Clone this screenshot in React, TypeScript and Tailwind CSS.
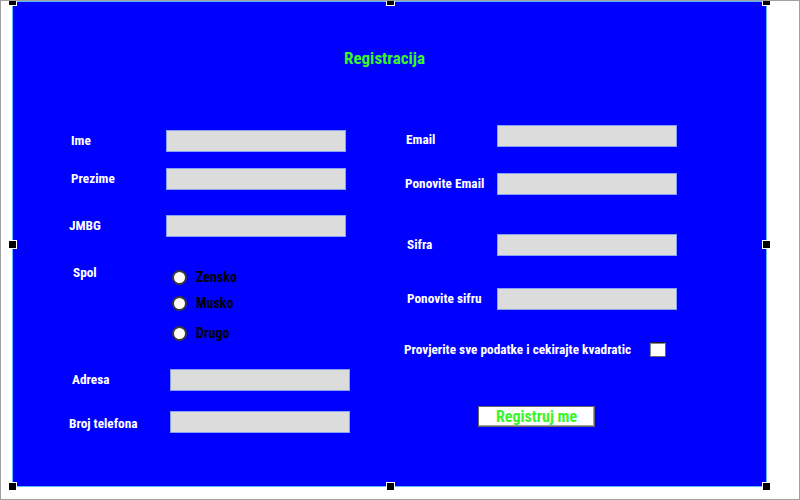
import React from "react";

const font = { fontFamily: '"Liberation Sans Narrow", "Roboto Condensed", Roboto, sans-serif' };

function Handle({ cls }: { cls: string }) {
  return <div className={`absolute w-[9px] h-[9px] bg-black border border-white ${cls}`} />;
}

function Field({ label, labelW, labelPl, labelPt = "", inputW = "w-[180px]", mt = "" }: { label: string; labelW: string; labelPl: string; labelPt?: string; inputW?: string; mt?: string }) {
  return (
    <div className={`flex items-center h-[22px] ${mt}`}>
      <div className={`${labelW} ${labelPl} ${labelPt} text-white font-bold text-[13.3px] leading-[16px] whitespace-nowrap`}>{label}</div>
      <div className={`${inputW} h-[22px] bg-[#dcdcdc] border border-[#86a2f2]`} />
    </div>
  );
}

function Radio({ label, mt = "" }: { label: string; mt?: string }) {
  return (
    <div className={`flex items-center h-[16px] ${mt}`}>
      <div className="w-[15px] h-[15px] rounded-full bg-white border-2 border-[#3a3a3a]" />
      <span className="ml-[9px] text-black font-bold text-[14px] leading-[16px]">{label}</span>
    </div>
  );
}

export default function App() {
  return (
    <div className="w-[800px] h-[500px] bg-white border border-[#a0a0a0] relative overflow-hidden" style={font}>
      <div className="relative ml-[11px] w-[755px] h-[486px] border border-[#5fb8ff] bg-[#0000ff]">
        <div className="pt-[46px] h-[66px] text-center pr-[10px] text-[17px] leading-[20px] font-bold text-[#3af52a]">Registracija</div>
        <div className="mt-[57px] flex items-start">
          {/* left column */}
          <div className="w-[379px] pt-[5px] flex flex-col">
            <Field label="Ime" labelW="w-[153px]" labelPl="pl-[58px]" />
            <Field label="Prezime" labelW="w-[153px]" labelPl="pl-[58px]" mt="mt-[16px]" />
            <Field label="JMBG" labelW="w-[153px]" labelPl="pl-[56px]" mt="mt-[25px]" />
            <div className="mt-[28px] flex items-start">
              <div className="w-[159px] pl-[60px] h-[16px] text-white font-bold text-[13.3px] leading-[16px]">Spol</div>
              <div className="mt-[4px] flex flex-col">
                <Radio label="Zensko" />
                <Radio label="Musko" mt="mt-[10px]" />
                <Radio label="Drugo" mt="mt-[14px]" />
              </div>
            </div>
            <Field label="Adresa" labelW="w-[157px]" labelPl="pl-[59px]" mt="mt-[28px]" />
            <Field label="Broj telefona" labelW="w-[157px]" labelPl="pl-[56px]" labelPt="pt-[3px]" mt="mt-[20px]" />
          </div>
          {/* right column */}
          <div className="flex flex-col">
            <Field label="Email" labelW="w-[105px]" labelPl="pl-[14px]" labelPt="pt-[8px]" />
            <Field label="Ponovite Email" labelW="w-[105px]" labelPl="pl-[13px]" mt="mt-[26px]" />
            <Field label="Sifra" labelW="w-[105px]" labelPl="pl-[15px]" mt="mt-[39px]" />
            <Field label="Ponovite sifru" labelW="w-[105px]" labelPl="pl-[15px]" mt="mt-[32px]" />
            <div className="mt-[32px] flex items-center h-[15px]">
              <div className="w-[257px] pl-[12px] text-white font-bold text-[13.3px] leading-[16px] whitespace-nowrap">Provjerite sve podatke i cekirajte kvadratic</div>
              <div className="w-[17px] h-[15px] bg-white border border-[#222] border-r-[#666] border-b-[#666] rounded-[2px] shadow-[inset_1px_1px_0_#888]" />
            </div>
            <div className="mt-[49px] ml-[86px] w-[117px] h-[21px] bg-white border border-[#666] shadow-[inset_-1px_-1px_0_#a0a0a0] flex items-center justify-center text-[16px] leading-[18px] font-bold text-[#3af52a]">Registruj me</div>
          </div>
        </div>
        <Handle cls="-left-[5px] -top-[5px]" />
        <Handle cls="left-[373px] -top-[5px]" />
        <Handle cls="-right-[5px] -top-[5px]" />
        <Handle cls="-left-[5px] top-[238px]" />
        <Handle cls="-right-[5px] top-[238px]" />
        <Handle cls="-left-[5px] -bottom-[5px]" />
        <Handle cls="left-[373px] -bottom-[5px]" />
        <Handle cls="-right-[5px] -bottom-[5px]" />
      </div>
    </div>
  );
}
